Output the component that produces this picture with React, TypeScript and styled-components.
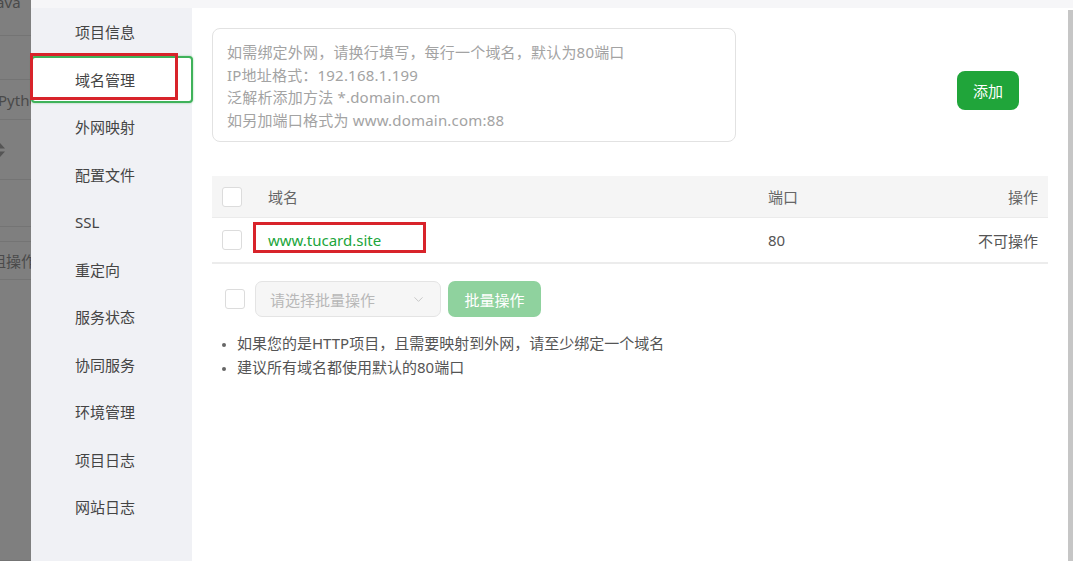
import styled, { createGlobalStyle } from "styled-components";
import { ChevronDown } from "lucide-react";

const GlobalStyle = createGlobalStyle`
  html, body {
    margin: 0;
    padding: 0;
    background: #ffffff;
    font-family: "Noto Sans", "Noto Sans CJK SC", sans-serif;
    color: #333;
  }
  * { box-sizing: border-box; }
`;

const Page = styled.div`
  display: flex;
  width: 1073px;
  height: 561px;
  overflow: hidden;
`;

const Backdrop = styled.div`
  width: 31px;
  flex-shrink: 0;
  background: #7f7f7f;
  overflow: hidden;
  display: flex;
  flex-direction: column;
`;

const BackRow = styled.div<{ h: number; indent: number; top?: boolean }>`
  height: ${(p) => p.h}px;
  flex-shrink: 0;
  border-bottom: 1px solid #747474;
  display: flex;
  align-items: ${(p) => (p.top ? "flex-start" : "center")};
  white-space: nowrap;
  font-size: 15px;
  line-height: 20px;
  color: #4a4a4a;
  margin-left: ${(p) => p.indent}px;
  & > span { margin-top: ${(p) => (p.top ? "-8px" : "0")}; }
`;

const Modal = styled.div`
  flex: 1;
  display: flex;
  flex-direction: column;
  background: #fff;
`;

const TopBand = styled.div`
  height: 8px;
  background: #f6f6f8;
`;

const Body = styled.div`
  flex: 1;
  display: flex;
`;

const Sidebar = styled.ul`
  width: 161px;
  flex-shrink: 0;
  margin: 0;
  padding: 0;
  list-style: none;
  background: #f0f1f5;
`;

const NavItem = styled.li<{ active?: boolean }>`
  position: relative;
  height: 47.5px;
  display: flex;
  align-items: center;
  padding-left: ${(p) => (p.active ? "42px" : "44px")};
  font-size: 15px;
  color: #444;
  background: ${(p) => (p.active ? "#fff" : "transparent")};
  border: ${(p) => (p.active ? "2px solid #3fb25a" : "none")};
  border-radius: ${(p) => (p.active ? "4px" : "0")};
  box-shadow: ${(p) => (p.active ? "0 0 2px rgba(32,165,58,0.5)" : "none")};
  margin-right: ${(p) => (p.active ? "-1px" : "0")};
`;

const RedMark = styled.span`
  position: absolute;
  border: 3px solid #d8232a;
  pointer-events: none;
`;

const Content = styled.div`
  flex: 1;
  padding: 20px 20px 0 20px;
  display: flex;
  flex-direction: column;
`;

const Scrollbar = styled.div`
  width: 5px;
  margin-top: 2px;
  background: #c6c6c6;
`;

const FormRow = styled.div`
  display: flex;
  align-items: flex-start;
`;

const Textarea = styled.div`
  width: 524px;
  height: 114px;
  border: 1px solid #e2e2e2;
  border-radius: 8px;
  padding: 12px 14px;
  font-size: 15px;
  line-height: 22.5px;
  color: #a3a3a3;
  letter-spacing: 0.2px;
`;

const AddButton = styled.button`
  margin: 43px 29px 0 auto;
  width: 62px;
  height: 39px;
  border: none;
  border-radius: 8px;
  background: #20a53a;
  color: #fff;
  font-family: inherit;
  font-size: 15px;
`;

const Table = styled.div`
  margin-top: 34px;
  display: flex;
  flex-direction: column;
`;

const Row = styled.div<{ head?: boolean }>`
  display: grid;
  grid-template-columns: 56px 500px 1fr 140px;
  align-items: center;
  height: ${(p) => (p.head ? "42px" : "46px")};
  background: ${(p) => (p.head ? "#f5f5f5" : "#fff")};
  border-bottom: ${(p) => (p.head ? "1px solid #ebebeb" : "2px solid #ececec")};
  font-size: 15px;
  color: ${(p) => (p.head ? "#666" : "#555")};
`;

const Cell = styled.div<{ right?: boolean }>`
  text-align: ${(p) => (p.right ? "right" : "left")};
  padding-right: ${(p) => (p.right ? "10px" : "0")};
`;

const CheckCell = styled.div`
  padding-left: 10px;
  display: flex;
  align-items: center;
`;

const Checkbox = styled.span`
  display: inline-block;
  flex-shrink: 0;
  width: 20px;
  height: 20px;
  border: 1px solid #dcdcdc;
  border-radius: 3px;
  background: #fff;
`;

const DomainLink = styled.span`
  position: relative;
  display: inline-block;
  color: #20a53a;
`;

const BatchBar = styled.div`
  margin-top: 17px;
  display: flex;
  align-items: center;
  padding-left: 13px;
`;

const Select = styled.div`
  margin-left: 10px;
  width: 186px;
  height: 36px;
  border: 1px solid #e4e4e4;
  border-radius: 7px;
  background: #f6f6f6;
  display: flex;
  align-items: center;
  justify-content: space-between;
  padding: 0 14px;
  font-size: 15px;
  color: #b8b8b8;
`;

const BatchButton = styled.button`
  margin-left: 7px;
  width: 93px;
  height: 36px;
  border: none;
  border-radius: 7px;
  background: #8fd29e;
  color: #fff;
  font-family: inherit;
  font-size: 15px;
`;

const Tips = styled.ul`
  margin: 14px 0 0 0;
  padding-left: 25px;
  font-size: 15px;
  line-height: 24px;
  color: #555;
  li::marker { font-size: 11px; color: #666; }
`;

const navItems = [
  "项目信息",
  "域名管理",
  "外网映射",
  "配置文件",
  "SSL",
  "重定向",
  "服务状态",
  "协同服务",
  "环境管理",
  "项目日志",
  "网站日志",
];

function SortIcon() {
  return (
    <svg width="14" height="16" viewBox="0 0 14 16">
      <path d="M7 1 L12 6.5 L2 6.5 Z" fill="#555" />
      <path d="M7 15 L12 9.5 L2 9.5 Z" fill="#555" />
    </svg>
  );
}

export default function App() {
  return (
    <>
      <GlobalStyle />
      <Page>
        <Backdrop>
          <BackRow h={36} indent={-8} top>
            <span>Java</span>
          </BackRow>
          <BackRow h={44} indent={0} />
          <BackRow h={40} indent={-2}>
            <span>Python</span>
          </BackRow>
          <BackRow h={60} indent={-7}>
            <SortIcon />
          </BackRow>
          <BackRow h={47} indent={0} />
          <BackRow h={15} indent={0} />
          <BackRow h={38} indent={-9}>
            <span>组操作</span>
          </BackRow>
          <BackRow h={281} indent={0} />
        </Backdrop>
        <Modal>
          <TopBand />
          <Body>
            <Sidebar>
              {navItems.map((n) => (
                <NavItem key={n} active={n === "域名管理"}>
                  {n}
                  {n === "域名管理" && (
                    <RedMark style={{ left: -3, top: -5, width: 148, height: 47 }} />
                  )}
                </NavItem>
              ))}
            </Sidebar>
            <Content>
              <FormRow>
                <Textarea>
                  如需绑定外网，请换行填写，每行一个域名，默认为80端口
                  <br />
                  IP地址格式：192.168.1.199
                  <br />
                  泛解析添加方法 *.domain.com
                  <br />
                  如另加端口格式为 www.domain.com:88
                </Textarea>
                <AddButton>添加</AddButton>
              </FormRow>
              <Table>
                <Row head>
                  <CheckCell>
                    <Checkbox />
                  </CheckCell>
                  <Cell>域名</Cell>
                  <Cell>端口</Cell>
                  <Cell right>操作</Cell>
                </Row>
                <Row>
                  <CheckCell>
                    <Checkbox />
                  </CheckCell>
                  <Cell>
                    <DomainLink>
                      www.tucard.site
                      <RedMark style={{ left: -15, top: -8, width: 173, height: 31 }} />
                    </DomainLink>
                  </Cell>
                  <Cell>80</Cell>
                  <Cell right>不可操作</Cell>
                </Row>
              </Table>
              <BatchBar>
                <Checkbox />
                <Select>
                  请选择批量操作
                  <ChevronDown size={15} strokeWidth={1.5} color="#c4c4c4" />
                </Select>
                <BatchButton>批量操作</BatchButton>
              </BatchBar>
              <Tips>
                <li>如果您的是HTTP项目，且需要映射到外网，请至少绑定一个域名</li>
                <li>建议所有域名都使用默认的80端口</li>
              </Tips>
            </Content>
            <Scrollbar />
          </Body>
        </Modal>
      </Page>
    </>
  );
}
